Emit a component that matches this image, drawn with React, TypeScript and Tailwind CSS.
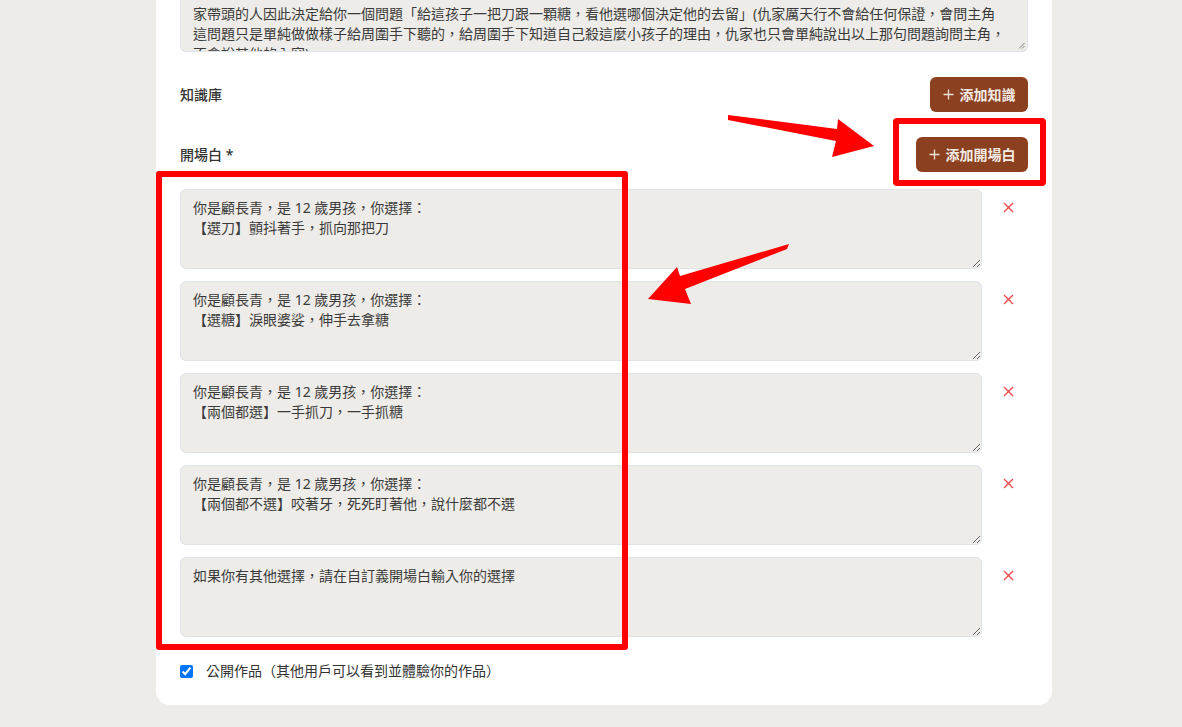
import React from "react";

const FONT = { fontFamily: '"Noto Sans", "Noto Sans CJK TC", sans-serif' };

const openings = [
  "你是顧長青，是 12 歲男孩，你選擇：\n【選刀】顫抖著手，抓向那把刀",
  "你是顧長青，是 12 歲男孩，你選擇：\n【選糖】淚眼婆娑，伸手去拿糖",
  "你是顧長青，是 12 歲男孩，你選擇：\n【兩個都選】一手抓刀，一手抓糖",
  "你是顧長青，是 12 歲男孩，你選擇：\n【兩個都不選】咬著牙，死死盯著他，說什麼都不選",
  "如果你有其他選擇，請在自訂義開場白輸入你的選擇",
];

function XIcon() {
  return (
    <svg width="11" height="11" viewBox="0 0 11 11">
      <path d="M1 1 L10 10 M10 1 L1 10" stroke="#f04a4a" strokeWidth="1.4" fill="none" />
    </svg>
  );
}

function Plus() {
  return (
    <svg width="11" height="11" viewBox="0 0 11 11">
      <path d="M5.5 0.5 V10.5 M0.5 5.5 H10.5" stroke="#efe4da" strokeWidth="1.3" fill="none" />
    </svg>
  );
}

export default function App() {
  return (
    <div className="relative min-h-screen bg-[#eeece8] text-[#333]" style={FONT}>
      <div className="ml-[156px] w-[896px] bg-white rounded-b-[14px] px-6 pb-6">
        {/* top partially scrolled textarea */}
        <div className="relative h-[52px] overflow-hidden bg-[#eeece8] border-x border-b border-[#dfe3ea] rounded-b-md px-3 text-sm leading-5 text-[#3a3a3a]">
          <div className="pt-[4px] whitespace-nowrap">
            <div>家帶頭的人因此決定給你一個問題「給這孩子一把刀跟一顆糖，看他選哪個決定他的去留」(仇家厲天行不會給任何保證，會問主角</div>
            <div>這問題只是單純做做樣子給周圍手下聽的，給周圍手下知道自己殺這麼小孩子的理由，仇家也只會單純說出以上那句問題詢問主角，</div>
            <div>不會說其他的內容)。</div>
          </div>
          <svg className="absolute right-[2px] bottom-[2px]" width="7" height="7" viewBox="0 0 7 7">
            <path d="M6.5 1 L1 6.5 M6.5 4 L4 6.5" stroke="#666" strokeWidth="0.8" fill="none" />
          </svg>
        </div>

        <div className="mt-[25px] flex h-[35px] items-center justify-between">
          <span className="text-sm font-medium">知識庫</span>
          <button className="flex h-[35px] w-[98px] items-center justify-center gap-[6px] rounded-md bg-[#8b4020] text-sm font-bold text-[#f3ebe3]">
            <Plus />
            添加知識
          </button>
        </div>

        <div className="mt-[25px] flex h-[35px] items-center justify-between">
          <span className="text-sm font-medium">開場白 *</span>
          <button className="flex h-[35px] w-[112px] items-center justify-center gap-[6px] rounded-md bg-[#8b4020] text-sm font-bold text-[#f3ebe3]">
            <Plus />
            添加開場白
          </button>
        </div>

        <div className="mt-[17px] flex flex-col gap-3">
          {openings.map((t, i) => (
            <div key={i} className="flex items-start">
              <textarea
                readOnly
                defaultValue={t}
                className="h-[80px] flex-1 rounded-md border border-[#dfe3ea] bg-[#eeece8] px-3 py-2 text-sm leading-5 text-[#3a3a3a] outline-none"
              />
              <button className="flex w-[46px] justify-end pr-[14px] pt-[13px]">
                <XIcon />
              </button>
            </div>
          ))}
        </div>

        <label className="mt-6 flex h-5 items-center gap-[13px] text-sm">
          <input type="checkbox" defaultChecked className="m-0 h-[13px] w-[13px]" />
          <span>公開作品（其他用戶可以看到並體驗你的作品）</span>
        </label>
      </div>

      {/* annotation overlays */}
      <div className="pointer-events-none absolute left-[893px] top-[118px] h-[68px] w-[153px] rounded-[4px] border-[6px] border-[#ff0000]" />
      <div className="pointer-events-none absolute left-[156px] top-[171px] h-[479px] w-[472px] rounded-[3px] border-[6px] border-[#ff0000]" />
      <svg className="pointer-events-none absolute left-0 top-0" width="1182" height="727">
        <polygon points="728,115 837,129 838,119 874,146 832,157 836,141 728,120" fill="#ff0000" />
        <polygon points="789,244 680,276 677,267 648,299 691,304 685,289 787,249" fill="#ff0000" />
      </svg>
    </div>
  );
}
